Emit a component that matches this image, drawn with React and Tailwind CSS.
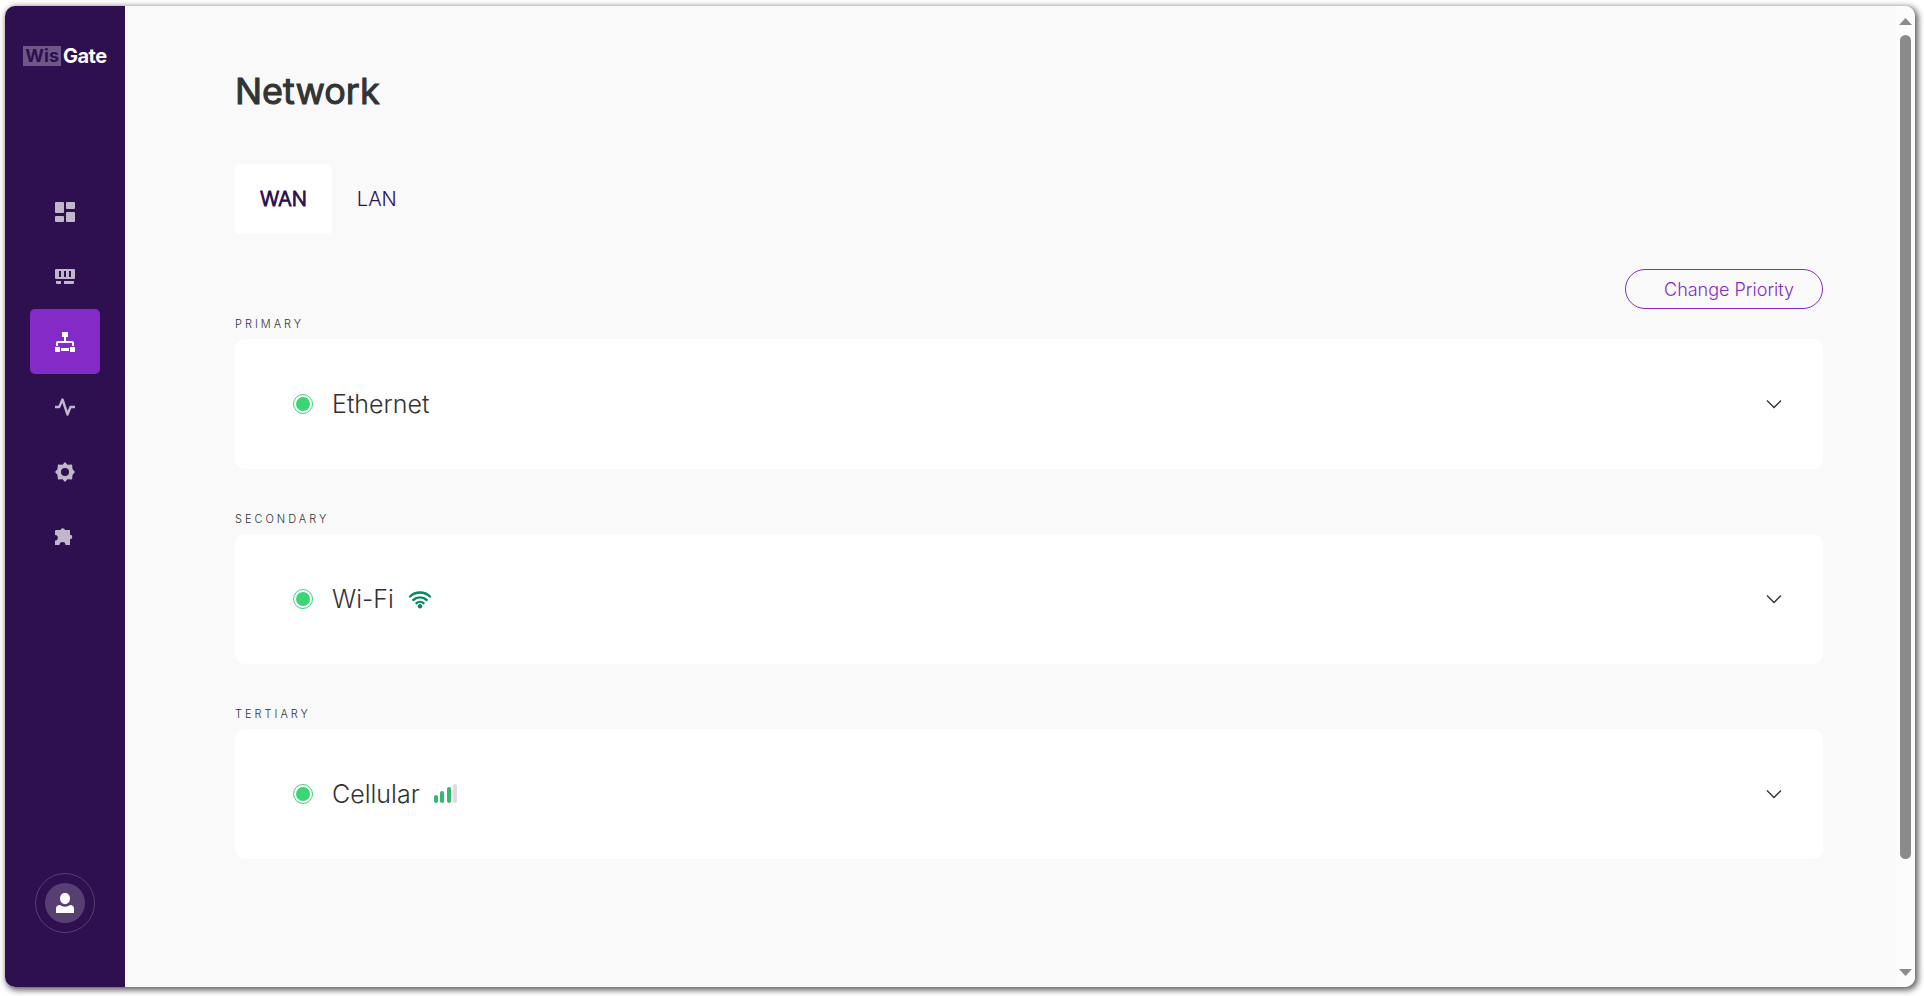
/**
 * Network page
 *
 * WAN / LAN settings of the gateway, with the list of WAN interfaces
 * ordered by priority.
 */

import { useState } from 'react';

const DashboardIcon = () => (
  <svg className="w-5 h-5" viewBox="0 0 20 20" fill="currentColor" aria-hidden="true">
    <rect x="0" y="0" width="9" height="11" rx="1" />
    <rect x="11" y="0" width="9" height="7" rx="1" />
    <rect x="0" y="14" width="9" height="6" rx="1" />
    <rect x="11" y="10" width="9" height="10" rx="1" />
  </svg>
);

const GatewayIcon = () => (
  <svg className="w-5 h-5" viewBox="0 0 20 20" fill="currentColor" aria-hidden="true">
    <path fillRule="evenodd" d="M1 2h18a1 1 0 0 1 1 1v8a1 1 0 0 1-1 1H1a1 1 0 0 1-1-1V3a1 1 0 0 1 1-1zM4 4v6h2V4zM9 4v6h2V4zM14 4v6h2V4z" />
    <path d="M1 14h5v3H2a1 1 0 0 1-1-1zM9 14h10v2a1 1 0 0 1-1 1H9z" />
  </svg>
);

const NetworkIcon = () => (
  <svg className="w-5 h-5" viewBox="0 0 20 20" fill="currentColor" aria-hidden="true">
    <path d="M7 0h6v5H7z" />
    <path d="M9 5h2v4h6a2 2 0 0 1 2 2v3h-2v-3H3v3H1v-3a2 2 0 0 1 2-2h6z" />
    <path d="M0 15h5v5H0zM15 15h5v5h-5zM6 16h8v3H6z" />
  </svg>
);

const ActivityIcon = () => (
  <svg className="w-5 h-5" viewBox="0 0 20 20" fill="none" stroke="currentColor" strokeWidth="2.400" strokeLinejoin="round" aria-hidden="true">
    <path d="M0 10h4.200L7.500 2.500l5 15L15.500 10H20" />
  </svg>
);

const SettingsIcon = () => (
  <svg className="w-5 h-5" viewBox="0 0 20 20" fill="currentColor" aria-hidden="true">
    <path
      fillRule="evenodd"
      d="M10 0l2.500 2.700 4.600-.2.400 4.400L20 10l-2.500 3.100-.4 4.400-4.600-.2L10 20l-2.500-2.700-4.600.2-.4-4.400L0 10l2.500-3.100.4-4.400 4.600.2zM10 6a4 4 0 1 0 0 8 4 4 0 0 0 0-8z"
    />
  </svg>
);

const ExtensionsIcon = () => (
  <svg className="w-5 h-5" viewBox="0 0 20 20" fill="currentColor" aria-hidden="true">
    <path d="M1 3h4.500a2.300 2.300 0 0 1 4.500 0h5v4.700a2.300 2.300 0 0 1 0 4.600V18h-4.500a3 3 0 0 0-6 0H0v-4.500a2.800 2.800 0 0 0 0-5.600V4a1 1 0 0 1 1-1z" />
  </svg>
);

const WifiIcon = () => (
  <svg className="w-6 h-5" viewBox="0 0 24 20" fill="none" stroke="#04895a" strokeWidth="2.400" strokeLinecap="round" aria-hidden="true">
    <path d="M2 7.500a14.500 14.500 0 0 1 20 0" />
    <path d="M5.300 11a9.800 9.800 0 0 1 13.400 0" />
    <path d="M8.500 14.200a5.200 5.200 0 0 1 7 0" />
    <circle cx="12" cy="17.300" r="2.200" fill="#04895a" stroke="none" />
  </svg>
);

const SignalIcon = () => (
  <svg className="w-6 h-5" viewBox="0 0 24 20" fill="#31b96e" aria-hidden="true">
    <rect x="0" y="11" width="4" height="8" rx="2" />
    <rect x="6" y="7" width="4" height="12" rx="2" />
    <rect x="13" y="3" width="4" height="16" rx="2" />
    <rect x="19" y="0" width="4" height="19" rx="2" fill="#dddddd" />
  </svg>
);

const ChevronIcon = () => (
  <svg className="w-4 h-4" viewBox="0 0 16 16" fill="none" stroke="#333333" strokeWidth="1.300" aria-hidden="true">
    <path d="M1 4.500l7 7 7-7" />
  </svg>
);

const NAV_ITEMS = [
  { id: 'dashboard', label: 'Dashboard', Icon: DashboardIcon },
  { id: 'gateway', label: 'LoRa Network', Icon: GatewayIcon },
  { id: 'network', label: 'Network', Icon: NetworkIcon },
  { id: 'diagnostics', label: 'Diagnostics', Icon: ActivityIcon },
  { id: 'settings', label: 'Settings', Icon: SettingsIcon },
  { id: 'extensions', label: 'Extensions', Icon: ExtensionsIcon },
];

const INTERFACES = [
  { priority: 'Primary', name: 'Ethernet' },
  { priority: 'Secondary', name: 'Wi-Fi', Icon: WifiIcon },
  { priority: 'Tertiary', name: 'Cellular', Icon: SignalIcon },
];

const Sidebar = ({ active, onSelect }) => (
  <aside className="w-[120px] shrink-0 flex flex-col items-center rounded-l-[10px] bg-[#2e0f4f] pt-10 pb-[54px]">
    <div className="flex items-center gap-0.5 leading-5 font-bold">
      <span className="bg-[#6e5786] px-0.5 text-[18px] leading-5 text-[#2e0f4f]">Wis</span>
      <span className="text-[20px] leading-5 tracking-tight text-white">Gate</span>
    </div>

    <nav className="mt-[113px] flex flex-col">
      {NAV_ITEMS.map(({ id, label, Icon }) => (
        <button
          key={id}
          type="button"
          aria-label={label}
          onClick={() => onSelect(id)}
          className={`w-[70px] h-[65px] flex items-center justify-center rounded-[5px] ${
            active === id ? 'bg-[#842bc7] text-white' : 'text-[#c0b7ca]'
          }`}
        >
          <Icon />
        </button>
      ))}
    </nav>

    <button
      type="button"
      aria-label="Account"
      className="mt-auto w-[60px] h-[60px] flex items-center justify-center rounded-full border border-[#583f72]"
    >
      <span className="w-10 h-10 flex items-center justify-center rounded-full bg-[#583f72] text-white">
        <svg className="w-5 h-5" viewBox="0 0 20 20" fill="currentColor" aria-hidden="true">
          <ellipse cx="10" cy="5.500" rx="5" ry="5.700" />
          <path d="M1 20v-4.500c0-2.200 1.500-3.500 4-3.500 1.400 1.200 3 1.700 5 1.700s3.600-.5 5-1.700c2.500 0 4 1.300 4 3.500V20z" />
        </svg>
      </span>
    </button>
  </aside>
);

const InterfaceCard = ({ priority, name, Icon }) => (
  <section>
    <h2 className="text-[11px] leading-4 font-light tracking-[3px] uppercase text-[#333333]">{priority}</h2>
    <button
      type="button"
      aria-expanded="false"
      className="mt-[7px] w-full h-[130px] flex items-center rounded-[10px] bg-white pl-[58px] pr-[41px]"
    >
      <span className="w-5 h-5 flex items-center justify-center rounded-full border border-[#3ad676]">
        <span className="w-3.5 h-3.5 rounded-full bg-[#3ad676]" />
      </span>
      <span className="ml-[19px] mr-3.5 text-[25px] leading-8 font-light text-[#333333]">{name}</span>
      {Icon && <Icon />}
      <span className="ml-auto">
        <ChevronIcon />
      </span>
    </button>
  </section>
);

// Scroll track at the right side of the window
const ScrollTrack = () => (
  <div className="w-[19px] shrink-0 flex flex-col items-center rounded-r-[10px] bg-[#fcfcfc] pt-3 pb-[11px]" aria-hidden="true">
    <svg className="w-[13px] h-[7px]" viewBox="0 0 13 7" fill="#8b8b8b">
      <path d="M6.500 0L13 7H0z" />
    </svg>
    <div className="mt-2.5 w-[11px] h-[86%] rounded-full bg-[#8b8b8b]" />
    <svg className="mt-auto w-[13px] h-[7px]" viewBox="0 0 13 7" fill="#8b8b8b">
      <path d="M6.500 7L13 0H0z" />
    </svg>
  </div>
);

const App = () => {
  const [activePage, setActivePage] = useState('network');
  const [activeTab, setActiveTab] = useState('WAN');

  return (
    <div className="h-screen bg-white pt-1.5 pl-[5px] pr-[9px] pb-[9px] font-['Inter',sans-serif]">
      <div className="h-full flex rounded-[10px] bg-[#f9f9f9] shadow-[2px_2px_6px_1px_rgba(0,0,0,0.65)]">
        <Sidebar active={activePage} onSelect={setActivePage} />

        <main className="flex-1 min-w-0 pl-[110px] pr-[73px] pt-[60px]">
          <h1 className="text-[36px] leading-[50px] [-webkit-text-stroke:1px_#333333] text-[#333333]">Network</h1>

          {/* Tabs */}
          <div role="tablist" className="mt-12 flex">
            {['WAN', 'LAN'].map((tab) => (
              <button
                key={tab}
                type="button"
                role="tab"
                aria-selected={activeTab === tab}
                onClick={() => setActiveTab(tab)}
                className={`h-[70px] px-[25px] rounded-[5px] text-[20px] font-light text-[#2e0f4f] ${
                  activeTab === tab ? 'bg-white [-webkit-text-stroke:1px_#2e0f4f]' : ''
                }`}
              >
                {tab}
              </button>
            ))}
          </div>

          <div className="mt-[35px] flex justify-end">
            <button
              type="button"
              className="h-10 pl-[38px] pr-7 rounded-full border border-[#842bc7] text-[18px] font-light text-[#842bc7]"
            >
              Change Priority
            </button>
          </div>

          {/* WAN interfaces */}
          <div className="mt-[7px] flex flex-col gap-[42px]">
            {INTERFACES.map((item) => (
              <InterfaceCard key={item.name} {...item} />
            ))}
          </div>
        </main>

        <ScrollTrack />
      </div>
    </div>
  );
};

export default App;
